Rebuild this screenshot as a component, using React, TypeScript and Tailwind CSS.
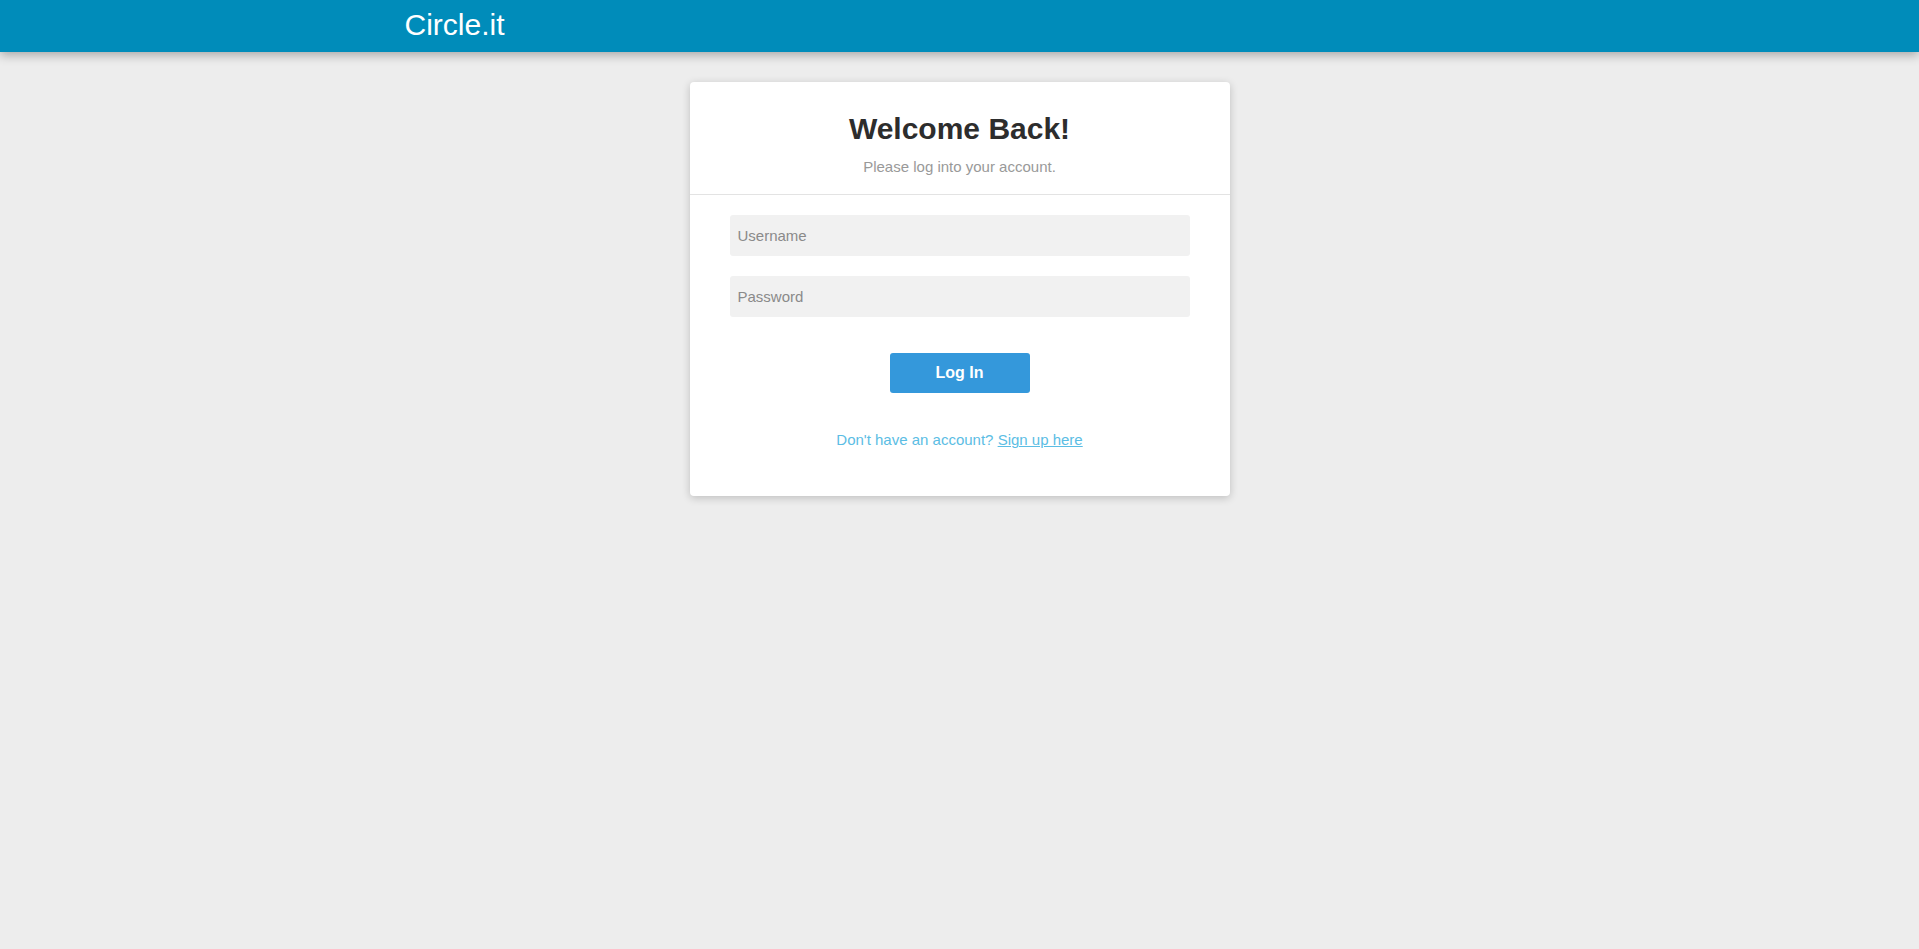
import React, { useState } from 'react';

const Header: React.FC = () => (
  <header className="relative z-10 h-[52px] w-full bg-[#008cba] shadow-[0_3px_10px_rgba(0,0,0,0.3)]">
    <div className="mx-auto flex h-full w-[1140px] items-center px-[15px] pb-[3px]">
      <a href="#" className="text-[30px] leading-[34px] text-white">
        Circle.it
      </a>
    </div>
  </header>
);

const LoginCard: React.FC = () => {
  const [username, setUsername] = useState('');
  const [password, setPassword] = useState('');

  return (
    <div className="w-[540px] rounded-[4px] bg-white shadow-[0_2px_8px_rgba(0,0,0,0.2)]">
      {/* Card header */}
      <div className="border-b border-[#e3e3e3] px-10 pt-[30px] pb-[19px] text-center">
        <h1 className="text-[30px] font-bold leading-[34px] text-[#2d2d2d]">Welcome Back!</h1>
        <p className="mt-[12px] text-[15px] leading-[17px] text-[#999999]">Please log into your account.</p>
      </div>

      {/* Form */}
      <form className="flex flex-col px-10 pt-[20px] pb-[48px]" onSubmit={(e) => e.preventDefault()}>
        <input
          type="text"
          value={username}
          onChange={(e) => setUsername(e.target.value)}
          placeholder="Username"
          className="h-[41px] w-full rounded-[3px] bg-[#f1f1f1] px-2 text-[15px] text-[#333] outline-none placeholder:text-[#8a8a8a]"
        />
        <input
          type="password"
          value={password}
          onChange={(e) => setPassword(e.target.value)}
          placeholder="Password"
          className="mt-[20px] h-[41px] w-full rounded-[3px] bg-[#f1f1f1] px-2 text-[15px] text-[#333] outline-none placeholder:text-[#8a8a8a]"
        />
        <button
          type="submit"
          className="mx-auto mt-[36px] h-[40px] w-[140px] rounded-[3px] bg-[#3498db] text-[16px] font-bold text-white"
        >
          Log In
        </button>
        <p className="mt-[38px] text-center text-[15px] leading-[17px] text-[#5bbde4]">
          Don't have an account?{' '}
          <a href="#" className="underline">
            Sign up here
          </a>
        </p>
      </form>
    </div>
  );
};

export default function App() {
  return (
    <div className="min-h-screen bg-[#ededed] font-['Liberation_Sans',Arial,sans-serif]">
      <Header />
      <main className="flex justify-center pt-[30px]">
        <LoginCard />
      </main>
    </div>
  );
}
